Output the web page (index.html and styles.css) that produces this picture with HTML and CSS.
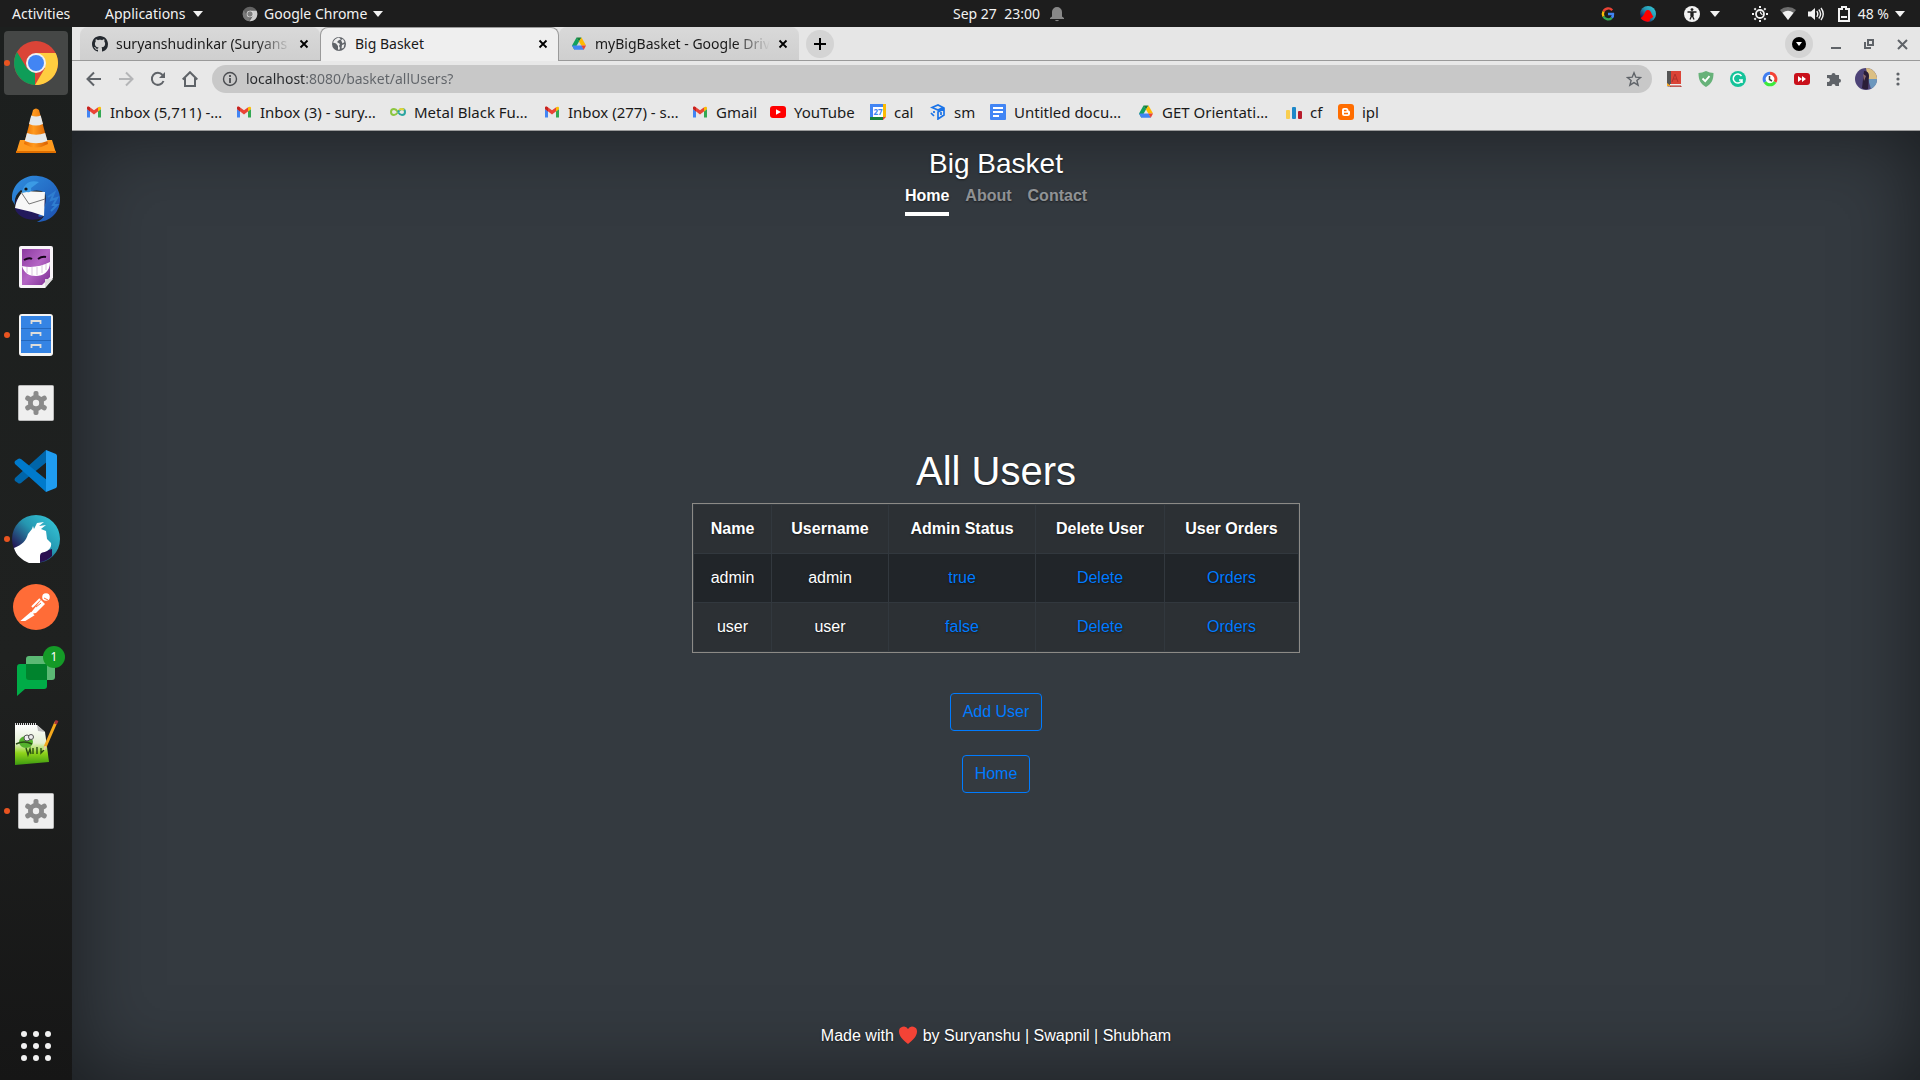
FILE: index.html
```html
<!DOCTYPE html>
<html lang="en">
<head>
<meta charset="utf-8">
<title>Big Basket</title>
<link rel="stylesheet" href="styles.css">
</head>
<body>
<svg class="defs" aria-hidden="true">
  <defs>
    <linearGradient id="g-orange" x1="0" x2="1"><stop offset="0" stop-color="#e86c00"/><stop offset=".4" stop-color="#ff9a1e"/><stop offset="1" stop-color="#d85f00"/></linearGradient>
    <linearGradient id="g-bird" x1="0" y1="0" x2="1" y2="1"><stop offset="0" stop-color="#2f8fdf"/><stop offset="1" stop-color="#1c4fb0"/></linearGradient>
    <linearGradient id="g-teal" x1="1" y1="0" x2="0" y2="1"><stop offset="0" stop-color="#38d0e0"/><stop offset=".45" stop-color="#2596b0"/><stop offset=".8" stop-color="#241a58"/></linearGradient>
    <linearGradient id="g-purple" x1="0" y1="0" x2="1" y2="1"><stop offset="0" stop-color="#8c3aa0"/><stop offset=".5" stop-color="#b465c4"/><stop offset="1" stop-color="#7d2f94"/></linearGradient>
    <linearGradient id="g-grass" x1="0" y1="0" x2="0" y2="1"><stop offset="0" stop-color="#fff"/><stop offset=".45" stop-color="#e4efd2"/><stop offset=".7" stop-color="#8fd41a"/><stop offset="1" stop-color="#3c9a10"/></linearGradient>
  </defs>
  <symbol id="caret" viewBox="0 0 10 6"><path d="M0 0h10L5 6z" fill="currentColor"/></symbol>
  <symbol id="close" viewBox="0 0 10 10"><path d="M1.500 1.500l7 7M8.500 1.500l-7 7" stroke="currentColor" stroke-width="1.800" fill="none"/></symbol>
  <symbol id="gmail" viewBox="0 0 16 16">
    <path d="M1 13.500V5l3 2.300v6.200z" fill="#4285f4"/><path d="M12 13.500V7.300L15 5v8.500z" fill="#34a853"/>
    <path d="M1 5V4c0-1.500 1.500-1.800 2.500-1L8 6.300 12.500 3v4L8 10.500z" fill="#ea4335"/><path d="M1 5V4c0-1.500 1.800-1.800 3-.6v4z" fill="#c5221f"/><path d="M12 7.400v-4c1.200-1.200 3-.9 3 .6v1z" fill="#fbbc04"/>
  </symbol>
  <symbol id="drive" viewBox="0 0 16 16">
    <path d="M5.500 1.500L1 9.500l2.300 4.200L8 5.500z" fill="#12a05c"/><path d="M5.500 1.500h5L8 5.700z" fill="#188038"/><path d="M10.500 1.500L15 9.500h-4.700L8 5.500z" fill="#ffba00"/>
    <path d="M1 9.500h9.500L13 13.800H3.400z" fill="#4285f4"/><path d="M10.300 9.500H15l-2.200 4.200z" fill="#ea4335"/>
  </symbol>
  <symbol id="chrome" viewBox="0 0 48 48">
    <circle cx="24" cy="24" r="22" fill="#db4437"/>
    <path d="M5 13L15 29.500 23 34v12A22 22 0 0 1 5 13z" fill="#0f9d58"/>
    <path d="M24 14h19.600A22 22 0 0 1 23 46l10-17z" fill="#ffcd40"/>
    <circle cx="24" cy="24" r="10" fill="#f1f1f1"/><circle cx="24" cy="24" r="8" fill="#4285f4"/>
  </symbol>
  <symbol id="gearfile" viewBox="0 0 36 36">
    <rect x=".5" y=".5" width="35" height="35" rx="1" fill="#efefef" stroke="#bbb"/>
    <g fill="#8a8a8a"><circle cx="18" cy="18" r="8"/><rect x="15.500" y="6" width="5" height="24" rx="2"/><rect x="15.500" y="6" width="5" height="24" rx="2" transform="rotate(60 18 18)"/><rect x="15.500" y="6" width="5" height="24" rx="2" transform="rotate(120 18 18)"/></g>
    <circle cx="18" cy="18" r="3.200" fill="#efefef"/>
  </symbol>
</svg>

<header class="topbar">
  <div class="topbar-left">
    <button class="shell-btn activities">Activities</button>
    <button class="shell-btn applications">Applications <svg class="caret"><use href="#caret"/></svg></button>
    <button class="shell-btn"><svg class="i16 gray"><use href="#chrome"/></svg>Google Chrome <svg class="caret"><use href="#caret"/></svg></button>
  </div>
  <button class="shell-btn clock"><span>Sep 27&nbsp; 23:00</span>
    <svg class="i16" viewBox="0 0 16 16"><path d="M8 1a5 5 0 0 1 5 5v4.500l2 1.500v1H1v-1l2-1.500V6a5 5 0 0 1 5-5zM6 14h4c-.5 1.500-3.500 1.500-4 0z" fill="#888"/></svg>
  </button>
  <div class="topbar-right">
    <svg class="i16" viewBox="0 0 16 16" fill="none" stroke-width="2.400"><path d="M12.200 4.200A5.200 5.200 0 0 0 3.500 5.500" stroke="#ea4335"/><path d="M3.500 5.500a5.200 5.200 0 0 0 0 5" stroke="#fbbc05"/><path d="M3.500 10.500a5.200 5.200 0 0 0 8.300 1.300" stroke="#34a853"/><path d="M11.800 11.800A5 5 0 0 0 13 8H8" stroke="#4285f4"/></svg>
    <svg class="i16 tray" viewBox="0 0 48 48"><circle cx="24" cy="24" r="24" fill="url(#g-teal)"/><path d="M2 36C8 32 12 28 14 21c3-6 5-10 11-9 6 1 8 7 10 12l5 8-5 5c-5 0-5 4-6 9-11 3-22-2-27-10z" fill="#f00"/></svg>
    <div class="tray-item">
      <svg class="i16" viewBox="0 0 16 16"><circle cx="8" cy="8" r="8" fill="#f2f2f2"/><circle cx="8" cy="3.600" r="1.400" fill="#1d1d1d"/><path d="M3.500 6h9M8 6v3.500M8 9l-2 4.500M8 9l2 4.500M7 6h2v3.500H7z" stroke="#1d1d1d" stroke-width="1.300" fill="#1d1d1d"/></svg>
      <svg class="caret"><use href="#caret"/></svg>
    </div>
    <button class="shell-btn status">
      <svg class="i16" viewBox="0 0 16 16"><circle cx="8" cy="8" r="4" fill="none" stroke="#f2f2f2" stroke-width="1.800"/><path d="M8 5a3 3 0 0 0 3 4z" fill="#f2f2f2"/><path d="M8 0v2M8 14v2M0 8h2M14 8h2M2.400 2.400l1.400 1.400M12.200 12.200l1.400 1.400M2.400 13.600l1.400-1.400M12.200 3.800l1.400-1.400" stroke="#f2f2f2" stroke-width="2"/></svg>
      <svg class="i16" viewBox="0 0 16 16"><path d="M0 4a12 12 0 0 1 16 0L8 14z" fill="#6d6d6d"/><path d="M2.500 6.800a9 9 0 0 1 11 0L8 14z" fill="#f2f2f2"/></svg>
      <svg class="i16" viewBox="0 0 16 16"><path d="M0 5.500h3L7 2v12l-4-3.500H0z" fill="#f2f2f2"/><path d="M8.800 5.200q2 2.800 0 5.600M10.800 3.500q3.600 4.500 0 9M13 2q4.500 6 0 12" fill="none" stroke="#f2f2f2" stroke-width="1.400"/></svg>
      <svg class="i16" viewBox="0 0 16 16"><path d="M3 3h3V1h4v2h3v12H3z" fill="none" stroke="#f2f2f2" stroke-width="2"/><path d="M5 10h6v2H5z" fill="#f2f2f2"/></svg>
      <span>48 %</span><svg class="caret"><use href="#caret"/></svg>
    </button>
  </div>
</header>

<div class="workspace">
  <nav class="dock" aria-label="Dock">
    <button class="dock-item active running" aria-label="Google Chrome"><svg class="i48"><use href="#chrome"/></svg></button>
    <button class="dock-item" aria-label="VLC"><svg class="i48" viewBox="0 0 48 48"><path d="M8 33h32l4 13H4z" fill="#ff9a1e"/><path d="M4 44h40v2H4z" fill="#e07000"/><path d="M21 3q3-3 6 0l9 34q-12 7-24 0z" fill="url(#g-orange)"/><path d="M19.200 8.500q5 2 9.500 0l2.300 8.500q-7 3-14 0zM15 26q9 3.500 18.200 0l2.300 8q-11.500 4.500-22.700 0z" fill="#e6e9ea"/></svg></button>
    <button class="dock-item" aria-label="Thunderbird"><svg class="i48" viewBox="0 0 48 48"><path d="M3 34L4 24h30l-4 19C20 47 7 44 3 34z" fill="#231a5c"/><path d="M0 25C-1 8 14-1 26 1c14 1 23 13 22 25-1 12-10 21-23 21 4-2 6-4 7-6-3 1-5 1-6 0 7-6 9-16 7-23-5-4-14-3-19 1l-5-4C4 19 2 24 3 30z" fill="url(#g-bird)"/><path d="M3 33C4 25 8 20 11 16l22 1-1 24Q18 36 3 33z" fill="#f7f7f7"/><path d="M9 17l8 12 16-5" fill="none" stroke="#777"/><path d="M10 18c1-9 8-14 17-11l-8 6c1 3-1 5-4 4z" fill="#3b9be5"/><circle cx="14" cy="14" r="1.600" fill="#111"/><path d="M36 22l6-4-3 7 6-2-4 7 4 0-6 6" fill="none" stroke="#2f7ed0" stroke-width="2"/></svg></button>
    <button class="dock-item" aria-label="Photo viewer"><svg class="i48" viewBox="0 0 48 48"><path d="M9 3h30q2 0 2 2v30l-8 10H9q-2 0-2-2V5q0-2 2-2z" fill="#f8f4f8"/><path d="M10 6h28v28l-8 8H10z" fill="url(#g-purple)"/><path d="M33 45V36h8z" fill="#ddd"/><path d="M12 17q5-3 8-1M26 16q4-3 8-2" stroke="#16051a" stroke-width="2" fill="none"/><path d="M10 23q14 3 28-4c0 10-7 14-14 14s-12-3-14-10z" fill="#fff"/><path d="M15 24v6M20 24v8M25 24v8M30 22v8M34 21v6" stroke="#d9c5de" stroke-width="1"/></svg></button>
    <button class="dock-item running" aria-label="Files"><svg class="i48" viewBox="0 0 48 48"><rect x="7" y="3" width="34" height="42" rx="3" fill="#f6f5f4"/><path d="M9 5h30v12H9zM9 18h30v11H9zM9 30h30v12H9z" fill="#3584e4"/><path d="M9 17.500h30M9 29.500h30" stroke="#2468bd"/><path d="M19.500 13v-3h9v3M19.500 25v-3h9v3M19.500 37v-3h9v3" fill="none" stroke="#deddda" stroke-width="1.800"/></svg></button>
    <button class="dock-item" aria-label="Application"><svg class="i36"><use href="#gearfile"/></svg></button>
    <button class="dock-item" aria-label="Visual Studio Code"><svg class="i48" viewBox="0 0 48 48"><path d="M34 3L3 31q-1 2 0 3l3 2q1 1 3 0L36 14z" fill="#0065a9"/><path d="M34 45L3 17q-1-2 0-3l3-2q1-1 3 0L36 34z" fill="#007acc"/><path d="M34 3l10 4q1 1 1 2v30q0 1-1 2l-10 4z" fill="#1f9cf0"/></svg></button>
    <button class="dock-item running" aria-label="Goat"><svg class="i48" viewBox="0 0 48 48"><circle cx="24" cy="24" r="24" fill="url(#g-teal)"/><path d="M28 47v-9l12-4v7q-5 5-12 6z" fill="#2a0f50"/><path d="M2 33c8-3 12-7 14-14l4-5 1-3 1 3 3-6 7-1-5 4 7-1-5 4 5 2 1 8 4 4q1 5-4 8c-3 2-7 0-7 6v9.500C17 49 5 44 2 33z" fill="#fff"/></svg></button>
    <button class="dock-item" aria-label="Postman"><svg class="i48" viewBox="0 0 48 48"><circle cx="24" cy="24" r="23" fill="#ff6c37"/><circle cx="34" cy="14" r="3.800" fill="#fff"/><path d="M29 17l4 4-9 9-6 1z" fill="#fff"/><path d="M11 37l8-7 2 2-8 5zM20 24l8-8M21 29l9-8M13 35l8-5" stroke="#fff" stroke-width="2" fill="#fff"/><path d="M32 15l4 2M24 24l5-4" stroke="#ff6c37" stroke-width="1"/></svg></button>
    <button class="dock-item" aria-label="Chat, 1 notification"><svg class="i48" viewBox="0 0 48 48"><rect x="14" y="5" width="29" height="24" rx="3" fill="#5bb974"/><path d="M8 13h27v22q0 3-3 3H13l-8 7V16q0-3 3-3z" fill="#00ac47"/><path d="M14 13h21v16H17q-3 0-3-3z" fill="#00832d"/></svg><span class="badge">1</span></button>
    <button class="dock-item" aria-label="Notepad"><svg class="i48" viewBox="0 0 48 48"><path d="M3 6h22l8 7 4 30-34 3z" fill="url(#g-grass)"/><path d="M3 5h22" stroke="#ddd" stroke-width="2" stroke-dasharray="1 1"/><path d="M25 6l1 6 7 1z" fill="#bbb"/><ellipse cx="14" cy="23" rx="7" ry="6" fill="#53b12c"/><circle cx="15" cy="19" r="3" fill="#eee" stroke="#555"/><circle cx="19" cy="18" r="2.500" fill="#eee" stroke="#555"/><path d="M4 25q8-4 16 0M14 29l2 7 2-6 1 5M21 29v6M25 28v7M29 29v5l3-3" stroke="#294d13" stroke-width="1.400" fill="none"/><path d="M44 3L33 28" stroke="#f5a91d" stroke-width="3"/><path d="M45 1.500l-1.500 3.500" stroke="#a8333a" stroke-width="3"/><path d="M33.500 27L32 31" stroke="#e8d0a0" stroke-width="2"/></svg></button>
    <button class="dock-item running" aria-label="Application"><svg class="i36"><use href="#gearfile"/></svg></button>
    <button class="dock-item show-apps" aria-label="Show applications"><svg class="i36" viewBox="0 0 36 36" fill="#f2f2f2"><circle cx="6" cy="6" r="3"/><circle cx="18" cy="6" r="3"/><circle cx="30" cy="6" r="3"/><circle cx="6" cy="18" r="3"/><circle cx="18" cy="18" r="3"/><circle cx="30" cy="18" r="3"/><circle cx="6" cy="30" r="3"/><circle cx="18" cy="30" r="3"/><circle cx="30" cy="30" r="3"/></svg></button>
  </nav>

  <div class="browser">
    <div class="tabstrip">
      <div class="tab">
        <svg class="i16" viewBox="0 0 16 16"><path fill="#24292f" d="M8 0C3.580 0 0 3.580 0 8c0 3.540 2.290 6.530 5.470 7.590.4.070.55-.17.55-.38 0-.19-.01-.82-.01-1.490-2.010.37-2.530-.49-2.690-.94-.09-.23-.48-.94-.82-1.130-.28-.15-.68-.52-.01-.53.63-.01 1.080.58 1.230.82.72 1.210 1.870.87 2.330.66.07-.52.28-.87.51-1.070-1.780-.2-3.640-.89-3.640-3.950 0-.87.31-1.590.82-2.150-.08-.2-.36-1.020.08-2.120 0 0 .67-.21 2.200.82.64-.18 1.320-.27 2-.27s1.360.09 2 .27c1.530-1.040 2.200-.82 2.200-.82.44 1.100.16 1.920.08 2.120.51.56.82 1.270.82 2.150 0 3.070-1.870 3.750-3.650 3.950.29.25.54.73.54 1.480 0 1.070-.01 1.930-.01 2.200 0 .21.15.46.55.38A8.010 8.010 0 0 0 16 8c0-4.420-3.580-8-8-8z"/></svg>
        <span class="tab-title">suryanshudinkar (Suryans</span>
        <button class="tab-close" aria-label="Close tab"><svg><use href="#close"/></svg></button>
      </div>
      <div class="tab current">
        <svg class="i16" viewBox="0 0 16 16"><circle cx="8" cy="8" r="7" fill="#5f6368"/><path d="M8 1.500C5 2 3 4 2 6.500l3 1 2 2.500v3l1 1.500 1-2.500-1-2 1-2-3-2 2-2 2-.5zM10 4l2-1 1.500 3-2 1.500zM11 9l2.500-1-1 4-2 .5z" fill="#eee"/></svg>
        <span class="tab-title">Big Basket</span>
        <button class="tab-close" aria-label="Close tab"><svg><use href="#close"/></svg></button>
      </div>
      <div class="tab">
        <svg class="i16"><use href="#drive"/></svg>
        <span class="tab-title">myBigBasket - Google Driv</span>
        <button class="tab-close" aria-label="Close tab"><svg><use href="#close"/></svg></button>
      </div>
      <button class="round-btn" aria-label="New tab"><svg class="i16" viewBox="0 0 16 16"><path d="M8 2v12M2 8h12" stroke="#000" stroke-width="2"/></svg></button>
      <div class="window-controls">
        <button class="round-btn" aria-label="Search tabs"><svg class="i16" viewBox="0 0 16 16"><circle cx="8" cy="8" r="7" fill="#000"/><path d="M5 6h6l-3 4z" fill="#fff"/></svg></button>
        <button class="win-btn" aria-label="Minimize"><svg class="i16" viewBox="0 0 16 16"><path d="M3 12h10" stroke="#5f6368" stroke-width="2"/></svg></button>
        <button class="win-btn" aria-label="Restore"><svg class="i16" viewBox="0 0 16 16"><path d="M7 4h5v5H7zM4 6v6h6" fill="none" stroke="#5f6368" stroke-width="2"/></svg></button>
        <button class="win-btn" aria-label="Close"><svg class="i16" viewBox="0 0 16 16"><path d="M4 4l9 9M13 4l-9 9" stroke="#5f6368" stroke-width="2"/></svg></button>
      </div>
    </div>

    <div class="toolbar">
      <button class="tool-btn" aria-label="Back"><svg class="i16" viewBox="0 0 16 16"><path d="M15 8H2M8 1.500L1.500 8 8 14.500" fill="none" stroke="#5f6368" stroke-width="2"/></svg></button>
      <button class="tool-btn" aria-label="Forward"><svg class="i16" viewBox="0 0 16 16"><path d="M1 8h13M8 1.500L14.500 8 8 14.500" fill="none" stroke="#b4b5b7" stroke-width="2"/></svg></button>
      <button class="tool-btn" aria-label="Reload"><svg class="i16" viewBox="0 0 16 16"><path d="M13.500 10A6 6 0 1 1 12.500 4" fill="none" stroke="#5f6368" stroke-width="2"/><path d="M15 1v6H9z" fill="#5f6368"/></svg></button>
      <button class="tool-btn" aria-label="Home"><svg class="i16" viewBox="0 0 16 16"><path d="M.7 8.500L8 1.200l7.300 7.300M3 7v8h10V7" fill="none" stroke="#5f6368" stroke-width="2"/></svg></button>
      <div class="omnibox">
        <svg class="i16" viewBox="0 0 16 16"><circle cx="8" cy="8" r="6.500" fill="none" stroke="#4a4c50" stroke-width="1.400"/><path d="M8 7v5M8 4v2" stroke="#4a4c50" stroke-width="1.800"/></svg>
        <input class="url" type="text" aria-label="Address" value="localhost:8080/basket/allUsers?">
        <svg class="i16" viewBox="0 0 16 16"><path d="M8 1.800l1.800 4.400 4.700.3-3.600 3 1.200 4.700L8 11.600l-4.100 2.600 1.200-4.700-3.600-3 4.700-.3z" fill="none" stroke="#5f6368" stroke-width="1.400"/></svg>
      </div>
      <button class="tool-btn" aria-label="Dictionary"><svg class="i16" viewBox="0 0 16 16"><path d="M1 0h14v13H1z" fill="#db4437"/><path d="M1 0h4v13l-3 3-1-2z" fill="#555"/><path d="M4 13h11v2H4z" fill="#eee"/><path d="M4 15h11v1H4zM6 11l3-8 3 8M7 8h4" stroke="#b3302a" fill="none"/><path d="M1 12l4 3H1z" fill="#f9a825"/></svg></button>
      <button class="tool-btn" aria-label="Ad blocker"><svg class="i16" viewBox="0 0 16 16"><path d="M8 0q4 2 7.500 2c0 7-2 11-7.500 14C2.500 13 .5 9 .5 2Q4 2 8 0z" fill="#67b279"/><path d="M4.500 7.500l2.700 2.700 4.300-5" fill="none" stroke="#fff" stroke-width="1.800"/></svg></button>
      <button class="tool-btn" aria-label="Grammar"><svg class="i16" viewBox="0 0 16 16"><circle cx="8" cy="8" r="8" fill="#15c39a"/><path d="M11.500 5A4.500 4.500 0 1 0 12 9H9M12 9v3" fill="none" stroke="#fff" stroke-width="1.500"/></svg></button>
      <button class="tool-btn" aria-label="Clock"><svg class="i16" viewBox="0 0 16 16" fill="none" stroke-width="3"><circle cx="8" cy="8" r="5" fill="#fff"/><path d="M8 2.200A5.800 5.800 0 0 1 13 11" stroke="#f44336"/><path d="M13 11a5.800 5.800 0 0 1-10 0" stroke="#3bea3b"/><path d="M3 11a5.800 5.800 0 0 1 5-8.800" stroke="#3f7df0"/><path d="M7.500 5v3.500L10 10" stroke="#444" stroke-width="1.500"/></svg></button>
      <button class="tool-btn" aria-label="Video speed"><svg class="i16" viewBox="0 0 16 16"><rect y="2" width="16" height="12" rx="3" fill="#c9101a"/><path d="M4 5l4 3-4 3zM8 5l4 3-4 3z" fill="#fff"/></svg></button>
      <button class="tool-btn" aria-label="Extensions"><svg class="i16" viewBox="0 0 16 16"><path d="M2 4h3.500a2 2 0 1 1 4 0H13v3.700a2 2 0 1 1 0 4V15H9.500a2 2 0 1 0-4 0H1v-4.300a2 2 0 1 0 0-3.500V4z" fill="#5f6368"/></svg></button>
      <button class="tool-btn" aria-label="Profile"><svg class="i22" viewBox="0 0 22 22"><circle cx="11" cy="11" r="11" fill="#4d4377"/><path d="M11 0a11 11 0 0 1 11 11h-9z" fill="#dcc083"/><path d="M13 11h9a11 11 0 0 1-6 10z" fill="#6c97bd"/><path d="M9 3q5 0 5 5l-1 13q-4 1-6-1z" fill="#2b1e38"/><path d="M8 6l3 2-2 5z" fill="#8a6a70"/></svg></button>
      <button class="tool-btn" aria-label="Menu"><svg class="i16" viewBox="0 0 16 16" fill="#5f6368"><circle cx="8" cy="3" r="1.600"/><circle cx="8" cy="8" r="1.600"/><circle cx="8" cy="13" r="1.600"/></svg></button>
    </div>

    <nav class="bookmarks" aria-label="Bookmarks">
      <a href="#"><svg class="i16"><use href="#gmail"/></svg>Inbox (5,711) -…</a>
      <a href="#"><svg class="i16"><use href="#gmail"/></svg>Inbox (3) - sury…</a>
      <a href="#"><svg class="i16" viewBox="0 0 16 16" fill="none" stroke-width="2"><path d="M8 8q-2-3-4-3a3 3 0 0 0 0 6q2 0 4-3" stroke="#8cc63f"/><path d="M8 8q2-3 4-3a3 3 0 0 1 0 6q-2 0-4-3" stroke="#2aa5a0"/><path d="M9 6q3-2 5 0" stroke="#e2d534"/></svg>Metal Black Fu…</a>
      <a href="#"><svg class="i16"><use href="#gmail"/></svg>Inbox (277) - s…</a>
      <a href="#"><svg class="i16"><use href="#gmail"/></svg>Gmail</a>
      <a href="#"><svg class="i16" viewBox="0 0 16 16"><rect y="2" width="16" height="12" rx="3" fill="#f00"/><path d="M6 5.200L11 8l-5 2.800z" fill="#fff"/></svg>YouTube</a>
      <a href="#"><svg class="i16" viewBox="0 0 16 16"><path d="M0 0h13v3H3v10H0z" fill="#4285f4"/><path d="M13 0h3v13h-3z" fill="#fbbc04"/><path d="M0 13h13v3H0z" fill="#188038"/><path d="M13 13h3l-3 3z" fill="#ea4335"/><path d="M3 3h10v10H3z" fill="#fff"/><text x="8" y="11" text-anchor="middle" class="cal-day">27</text></svg>cal</a>
      <a href="#"><svg class="i16" viewBox="0 0 16 16" fill="none" stroke="#1a73e8" stroke-width="1.700"><path d="M2 3.500L8 1l5 2.500L8 6zM8 8l6-3v6l-6 4zM11 8v3"/><path d="M1 9l3 3M4 7v2"/></svg>sm</a>
      <a href="#"><svg class="i16" viewBox="0 0 16 16"><rect width="16" height="16" rx="1" fill="#4285f4"/><path d="M3 4h10M3 8h10M3 12h6" stroke="#fff" stroke-width="2"/></svg>Untitled docu…</a>
      <a href="#"><svg class="i16"><use href="#drive"/></svg>GET Orientati…</a>
      <a href="#"><svg class="i16" viewBox="0 0 16 16"><rect y="6" width="4" height="9" rx="1" fill="#f9ce4f"/><rect x="6" y="3" width="4" height="12" rx="1" fill="#1e88c9"/><rect x="12" y="7" width="4" height="8" rx="1" fill="#b71c2c"/></svg>cf</a>
      <a href="#"><svg class="i16" viewBox="0 0 16 16"><rect width="16" height="16" rx="3" fill="#ff6d00"/><path d="M6 4h2.500Q10.500 4 10.500 6.500q1.500 0 1.500 1.500v1.500Q12 12 9.500 12h-3Q4 12 4 9.500V6q0-2 2-2z" fill="#fff"/><path d="M6 6.500h2.500M6 9.500h4" stroke="#ff6d00" stroke-width="1.300"/></svg>ipl</a>
    </nav>

    <div class="page">
      <div class="cover">
        <header class="masthead">
          <h3 class="brand">Big Basket</h3>
          <nav class="nav">
            <a class="nav-link selected" href="#">Home</a>
            <a class="nav-link" href="#">About</a>
            <a class="nav-link" href="#">Contact</a>
          </nav>
        </header>
        <main class="content">
          <h1 class="title">All Users</h1>
          <table class="users">
            <colgroup><col class="c-name"><col class="c-username"><col class="c-status"><col class="c-delete"><col class="c-orders"></colgroup>
            <thead><tr><th>Name</th><th>Username</th><th>Admin Status</th><th>Delete User</th><th>User Orders</th></tr></thead>
            <tbody>
              <tr><td>admin</td><td>admin</td><td><a href="#">true</a></td><td><a href="#">Delete</a></td><td><a href="#">Orders</a></td></tr>
              <tr><td>user</td><td>user</td><td><a href="#">false</a></td><td><a href="#">Delete</a></td><td><a href="#">Orders</a></td></tr>
            </tbody>
          </table>
          <button class="btn">Add User</button>
          <button class="btn">Home</button>
        </main>
        <footer class="foot">Made with <svg class="heart" viewBox="0 0 20 18" role="img" aria-label="love"><path d="M10 18C5 14 1 10 1 5.500A4.800 4.800 0 0 1 10 3a4.800 4.800 0 0 1 9 2.500C19 10 15 14 10 18z" fill="#f44336"/></svg> by Suryanshu | Swapnil | Shubham</footer>
      </div>
    </div>
  </div>
</div>
</body>
</html>
```

FILE: styles.css
```css
* { box-sizing: border-box; }

body {
  margin: 0;
  min-height: 100vh;
  display: flex;
  flex-direction: column;
  font: 14px/20px "Noto Sans", sans-serif;
  background: #1d1d1d;
}

button {
  margin: 0;
  padding: 0;
  border: 0;
  background: none;
  font: inherit;
  color: inherit;
}

a { text-decoration: none; }
svg { display: block; flex: none; }
.defs { position: absolute; width: 0; height: 0; }
.i16 { width: 16px; height: 16px; }
.i22 { width: 22px; height: 22px; }
.i36 { width: 36px; height: 36px; }
.i48 { width: 48px; height: 48px; }
.gray { filter: grayscale(1); }
.caret { width: 10px; height: 6px; }

/* Desktop top bar */
.topbar {
  display: grid;
  grid-template-columns: 953fr 112px 855fr;
  align-items: center;
  height: 27px;
  color: #f2f2f2;
}
.topbar-left { display: flex; padding-left: 12px; }
.shell-btn { display: flex; align-items: center; gap: 6px; white-space: nowrap; }
.activities { width: 93px; }
.applications { width: 137px; gap: 8px; }
.clock { justify-content: space-between; }
.topbar-right {
  display: flex;
  align-items: center;
  justify-content: flex-end;
  gap: 24px;
  padding-right: 15px;
}
.tray { margin-right: 4px; }
.tray-item { display: flex; align-items: center; gap: 10px; margin-right: 8px; }
.status { gap: 12px; }
.status span { margin: 0 -6px; }

.workspace { flex: 1; display: flex; }

/* Dock */
.dock {
  flex: none;
  width: 72px;
  display: flex;
  flex-direction: column;
  align-items: center;
  gap: 4px;
  padding: 4px 0 2px;
  background: linear-gradient(#1c1f1e, #1f2120 60%, #161616);
}
.dock-item {
  position: relative;
  width: 64px;
  height: 64px;
  display: flex;
  align-items: center;
  justify-content: center;
  border-radius: 4px;
}
.dock-item.active { background: #454746; }
.dock-item.running::before {
  content: "";
  position: absolute;
  left: 0;
  top: 29px;
  width: 6px;
  height: 6px;
  border-radius: 50%;
  background: #e95420;
}
.badge {
  position: absolute;
  top: 3px;
  right: 3px;
  width: 22px;
  height: 22px;
  border-radius: 50%;
  background: #149a27;
  color: #fff;
  font-size: 12px;
  line-height: 22px;
}
.show-apps { margin-top: auto; }

/* Browser window */
.browser {
  flex: 1;
  min-width: 0;
  display: flex;
  flex-direction: column;
  background: #e8e8e8;
}
.tabstrip {
  display: flex;
  height: 34px;
  padding-left: 8px;
  border-bottom: 1px solid #9a9a9a;
  background: #e6e6e6;
}
.tab {
  width: 240px;
  display: flex;
  align-items: center;
  gap: 8px;
  padding: 0 11px 0 12px;
  border-radius: 8px 8px 0 0;
  background: linear-gradient(#d9d9d9, #cfcfcf);
}
.tab.current {
  width: 239px;
  margin-bottom: -1px;
  padding: 0 10px 2px;
  border: 1px solid #9a9a9a;
  border-bottom: 0;
  background: #efefef;
}
.tab-title {
  flex: 1;
  overflow: hidden;
  white-space: nowrap;
  color: #1a1a1a;
  mask-image: linear-gradient(to right, #000 80%, transparent);
}
.tab.current .tab-title { mask-image: none; }
.tab-close svg { width: 10px; height: 10px; }
.round-btn {
  align-self: center;
  width: 28px;
  height: 28px;
  display: flex;
  align-items: center;
  justify-content: center;
  border-radius: 50%;
  background: #d4d4d4;
}
.tab + .round-btn { margin-left: 7px; }
.window-controls { display: flex; align-items: center; gap: 17px; margin-left: auto; padding-right: 10px; }
.window-controls .round-btn { margin-right: -2px; }

.toolbar {
  display: flex;
  align-items: center;
  height: 36px;
  padding: 0 6px;
}
.tool-btn {
  width: 32px;
  height: 32px;
  display: flex;
  align-items: center;
  justify-content: center;
}
.omnibox {
  flex: 1;
  display: flex;
  align-items: center;
  gap: 8px;
  height: 28px;
  margin: 0 6px;
  padding: 0 10px;
  border-radius: 14px;
  background: #c8c8c8;
}
.url {
  flex: 1;
  min-width: 0;
  padding: 0;
  border: 0;
  font: inherit;
  color: transparent;
  background: linear-gradient(to right, #26282b 60px, #5f6368 60px);
  background-clip: text;
}

.bookmarks {
  display: grid;
  grid-template-columns: 150px 154px 154px 148px 78px 100px 60px 60px 148px 148px 52px 60px;
  align-items: center;
  height: 34px;
  padding: 0 0 4px 14px;
  border-bottom: 1px solid #9a9a9a;
  font-size: 15px;
}
.bookmarks a { display: flex; align-items: center; gap: 8px; color: #1a1a1a; white-space: nowrap; }
.cal-day { font: bold 8px "Noto Sans", sans-serif; fill: #4285f4; }

/* Web page */
.page {
  flex: 1;
  display: flex;
  justify-content: center;
  background: #343a40;
  box-shadow: inset 0 0 80px rgba(0, 0, 0, .5);
  color: #fff;
  font: 16px/24px "Liberation Sans", Arial, sans-serif;
  text-shadow: 0 1px 2px rgba(0, 0, 0, .5);
}
.cover {
  width: 672px;
  display: flex;
  flex-direction: column;
  justify-content: space-between;
  padding: 16px 16px 32px;
  text-align: center;
}
.brand { margin: 0; font-size: 28px; font-weight: 400; line-height: 33px; }
.nav { display: flex; justify-content: center; gap: 16px; }
.nav-link {
  padding: 4px 0;
  border-bottom: 4px solid transparent;
  font-weight: 700;
  color: rgba(255, 255, 255, .5);
}
.nav-link.selected { color: #fff; border-color: #fff; }
.content { display: flex; flex-direction: column; align-items: center; }
.title { margin: 0 0 8px; font-size: 40px; font-weight: 400; line-height: 48px; }

.users {
  margin: 1px 0 41px;
  table-layout: fixed;
  width: 606px;
  border-collapse: collapse;
  outline: 1px solid #8c8a86;
  background: #212529;
}
.c-name { width: 78px; }
.c-username { width: 117px; }
.c-status { width: 147px; }
.c-delete { width: 129px; }
.users th, .users td { padding: 12px 0; border: 1px solid #32383e; }
.users thead tr, .users tbody tr:nth-child(even) { background: #2c3034; }
.users a { color: #007bff; }

.btn {
  height: 38px;
  padding: 0 12px;
  border: 1px solid #007bff;
  border-radius: 4px;
  color: #007bff;
}
.btn + .btn { margin-top: 24px; }
.heart { display: inline-block; width: 20px; height: 18px; vertical-align: -3px; }
```
